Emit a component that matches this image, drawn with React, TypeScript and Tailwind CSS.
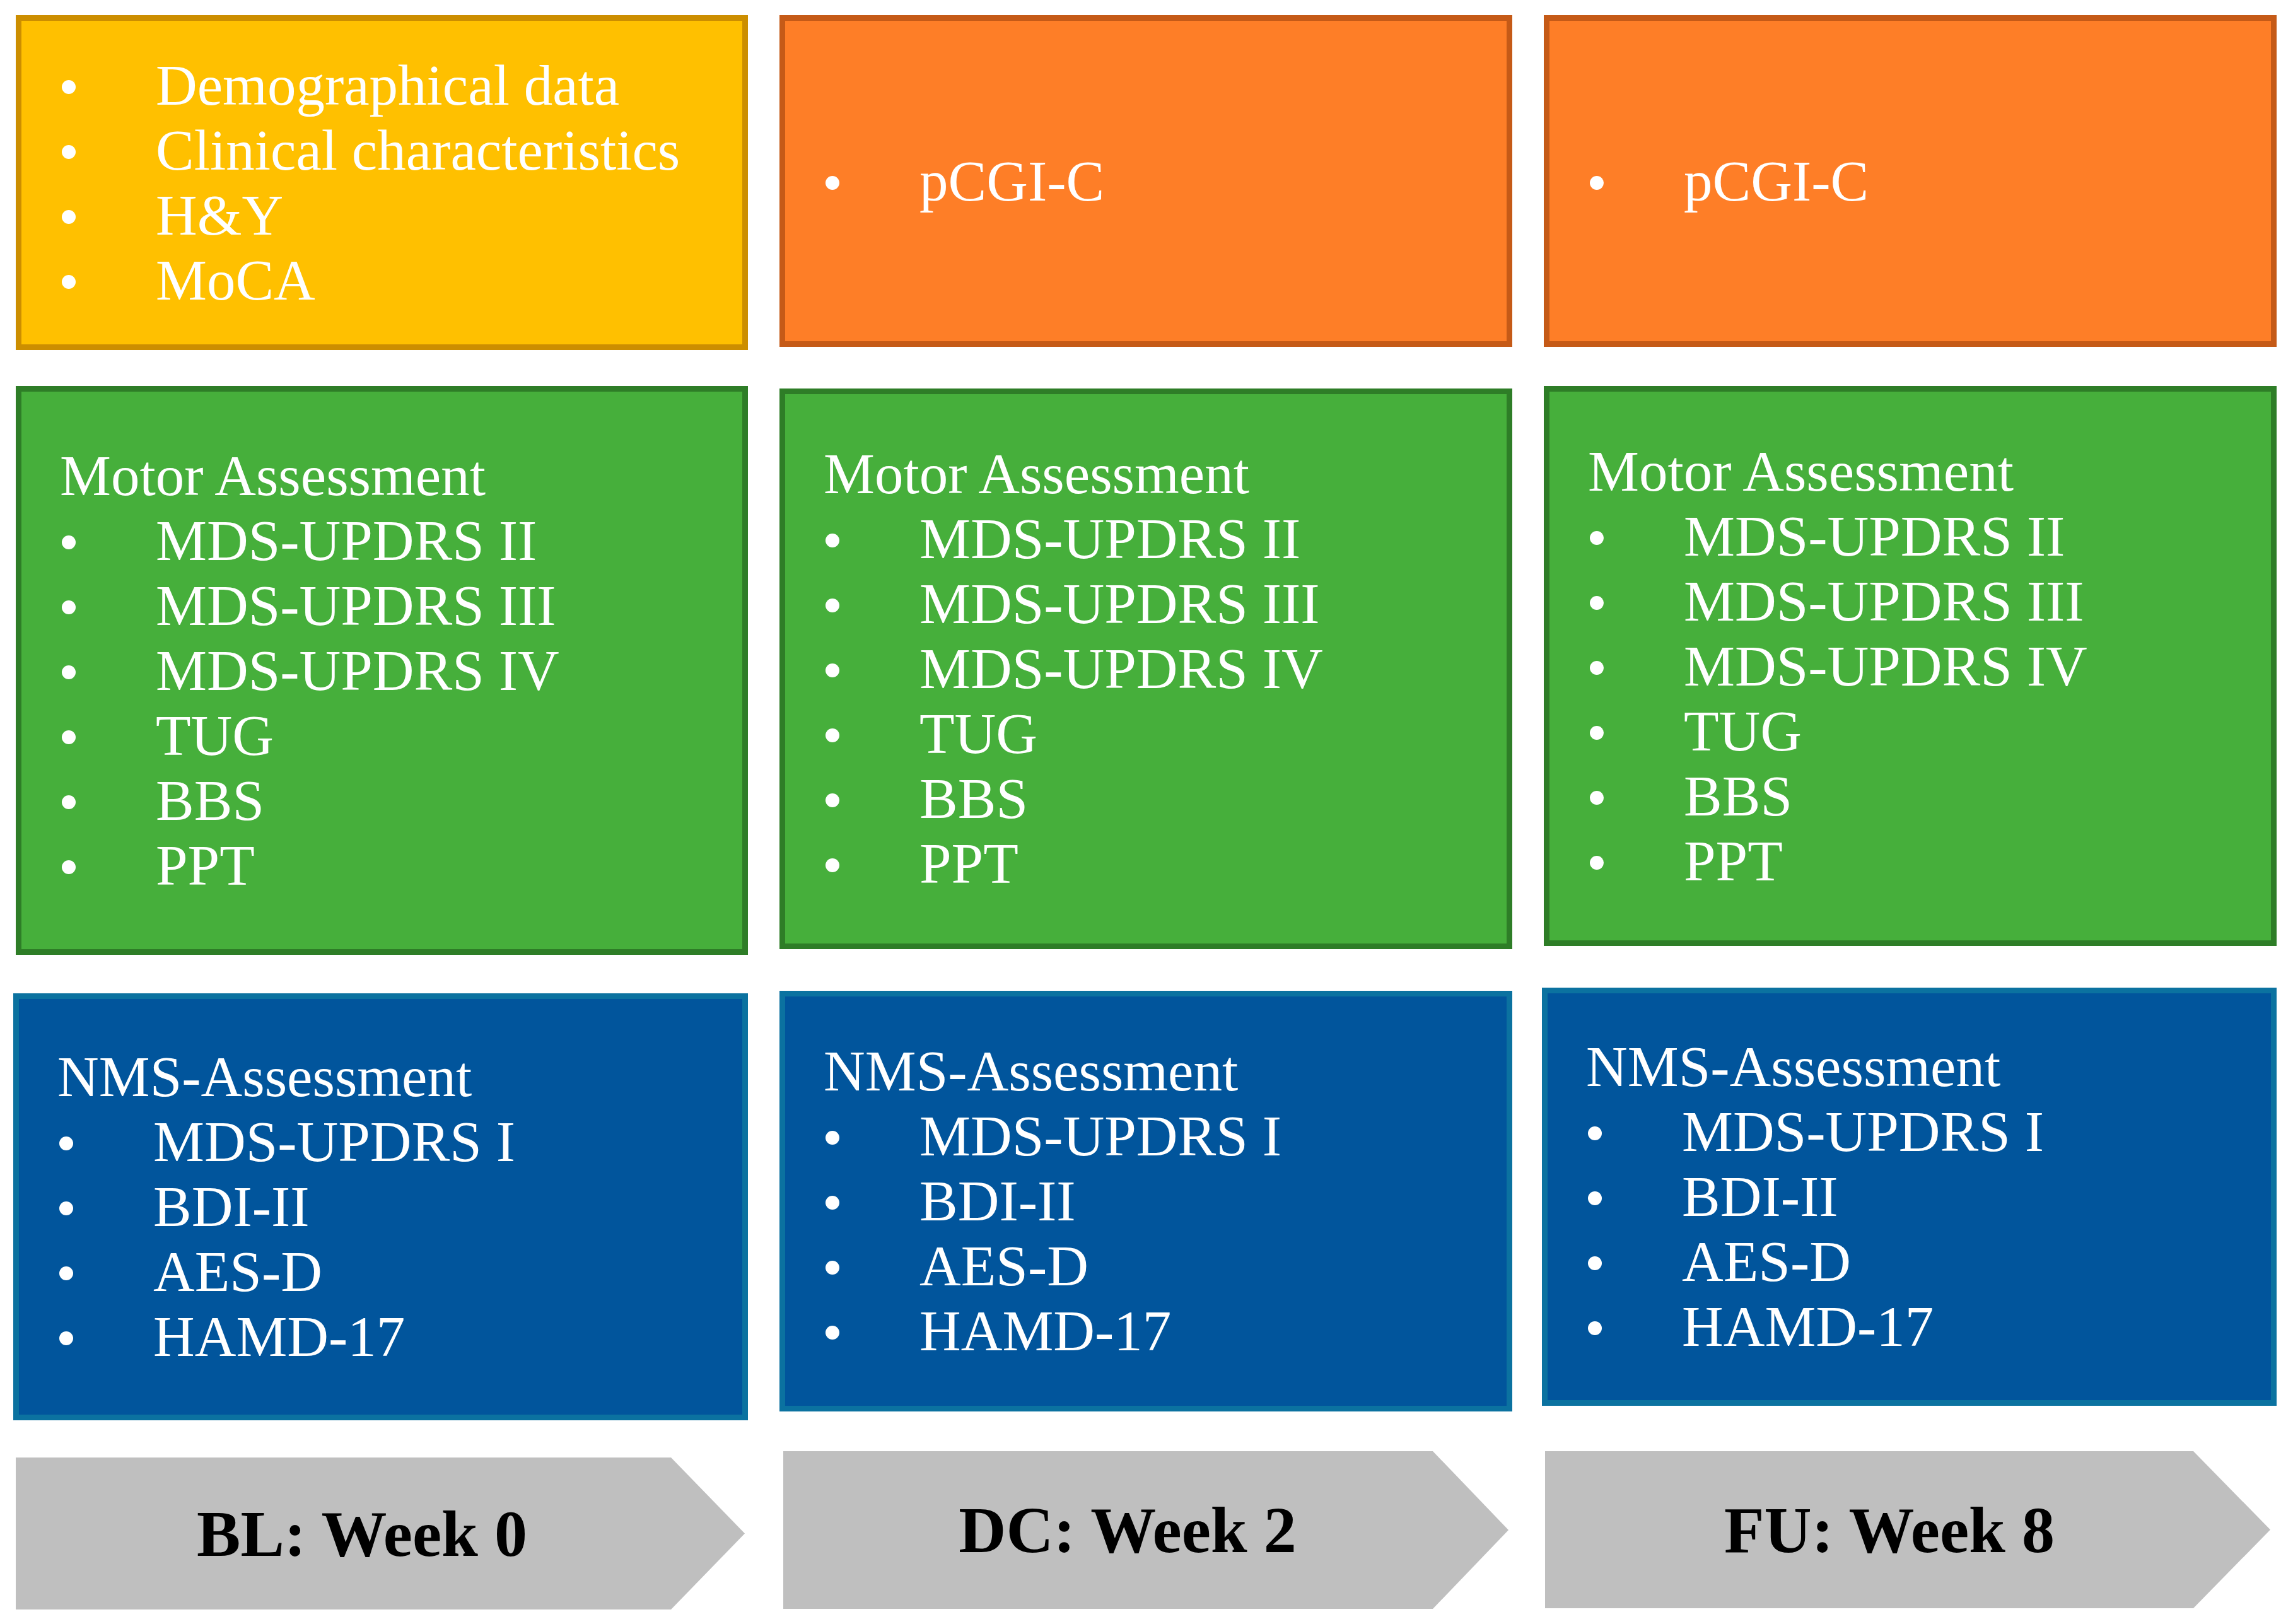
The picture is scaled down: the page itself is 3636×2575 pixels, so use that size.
import React from "react";

const serif = "font-['Liberation_Serif','Times_New_Roman',serif]";

function Item({ children }: { children: React.ReactNode }) {
  return (
    <div className="flex">
      <div className="w-[152px] shrink-0 pt-[43px] pl-[3px]">
        <div className="w-[22px] h-[22px] rounded-full bg-white" />
      </div>
      <span className="whitespace-nowrap">{children}</span>
    </div>
  );
}

function Box({
  className,
  heading,
  items,
}: {
  className: string;
  heading?: string;
  items: string[];
}) {
  return (
    <div
      className={`border-[9px] flex flex-col justify-center pl-[61px] text-white text-[91px] leading-[103px] ${serif} ${className}`}
    >
      {heading && <div className="whitespace-nowrap">{heading}</div>}
      {items.map((t) => (
        <Item key={t}>{t}</Item>
      ))}
    </div>
  );
}

function Arrow({ className, label }: { className: string; label: string }) {
  return (
    <div
      className={`bg-[#bfbfbf] flex items-center justify-center pr-[58px] text-black font-bold text-[104px] leading-none ${serif} ${className}`}
    >
      <span className="whitespace-nowrap">{label}</span>
    </div>
  );
}

const motor = [
  "MDS-UPDRS II",
  "MDS-UPDRS III",
  "MDS-UPDRS IV",
  "TUG",
  "BBS",
  "PPT",
];
const nms = ["MDS-UPDRS I", "BDI-II", "AES-D", "HAMD-17"];

export default function App() {
  return (
    <div className="w-[3636px] h-[2575px] bg-white flex gap-[50px] pl-[25px] pt-[24px] overflow-hidden">
      {/* Column 1 */}
      <div className="w-[1161px] flex flex-col">
        <Box
          className="h-[531px] bg-[#ffc000] border-[#cc8e00]"
          items={["Demographical data", "Clinical characteristics", "H&Y", "MoCA"]}
        />
        <Box
          className="mt-[57px] h-[902px] bg-[#46af3b] border-[#2e7d27]"
          heading="Motor Assessment"
          items={motor}
        />
        <Box
          className="mt-[61px] h-[677px] -ml-[4px] w-[1165px] bg-[#01559c] border-[#0b72a0]"
          heading="NMS-Assessment"
          items={nms}
        />
        <Arrow
          className="mt-[59px] h-[241px] w-[1156px] [clip-path:polygon(0_0,calc(100%_-_117px)_0,100%_50%,calc(100%_-_117px)_100%,0_100%)]"
          label="BL: Week 0"
        />
      </div>

      {/* Column 2 */}
      <div className="w-[1162px] flex flex-col">
        <Box
          className="h-[526px] bg-[#fe7e27] border-[#c55a17]"
          items={["pCGI-C"]}
        />
        <Box
          className="mt-[66px] h-[889px] bg-[#46af3b] border-[#2e7d27]"
          heading="Motor Assessment"
          items={motor}
        />
        <Box
          className="mt-[66px] h-[667px] bg-[#01559c] border-[#0b72a0]"
          heading="NMS-Assessment"
          items={nms}
        />
        <Arrow
          className="mt-[63px] ml-[6px] h-[250px] w-[1150px] [clip-path:polygon(0_0,calc(100%_-_120px)_0,100%_50%,calc(100%_-_120px)_100%,0_100%)]"
          label="DC: Week 2"
        />
      </div>

      {/* Column 3 */}
      <div className="w-[1162px] flex flex-col">
        <Box
          className="h-[526px] bg-[#fe7e27] border-[#c55a17]"
          items={["pCGI-C"]}
        />
        <Box
          className="mt-[62px] h-[888px] bg-[#46af3b] border-[#2e7d27]"
          heading="Motor Assessment"
          items={motor}
        />
        <Box
          className="mt-[66px] h-[663px] -ml-[3px] w-[1165px] bg-[#01559c] border-[#0b72a0]"
          heading="NMS-Assessment"
          items={nms}
        />
        <Arrow
          className="mt-[72px] ml-[2px] h-[249px] w-[1150px] [clip-path:polygon(0_0,calc(100%_-_122px)_0,100%_50%,calc(100%_-_122px)_100%,0_100%)]"
          label="FU: Week 8"
        />
      </div>
    </div>
  );
}
